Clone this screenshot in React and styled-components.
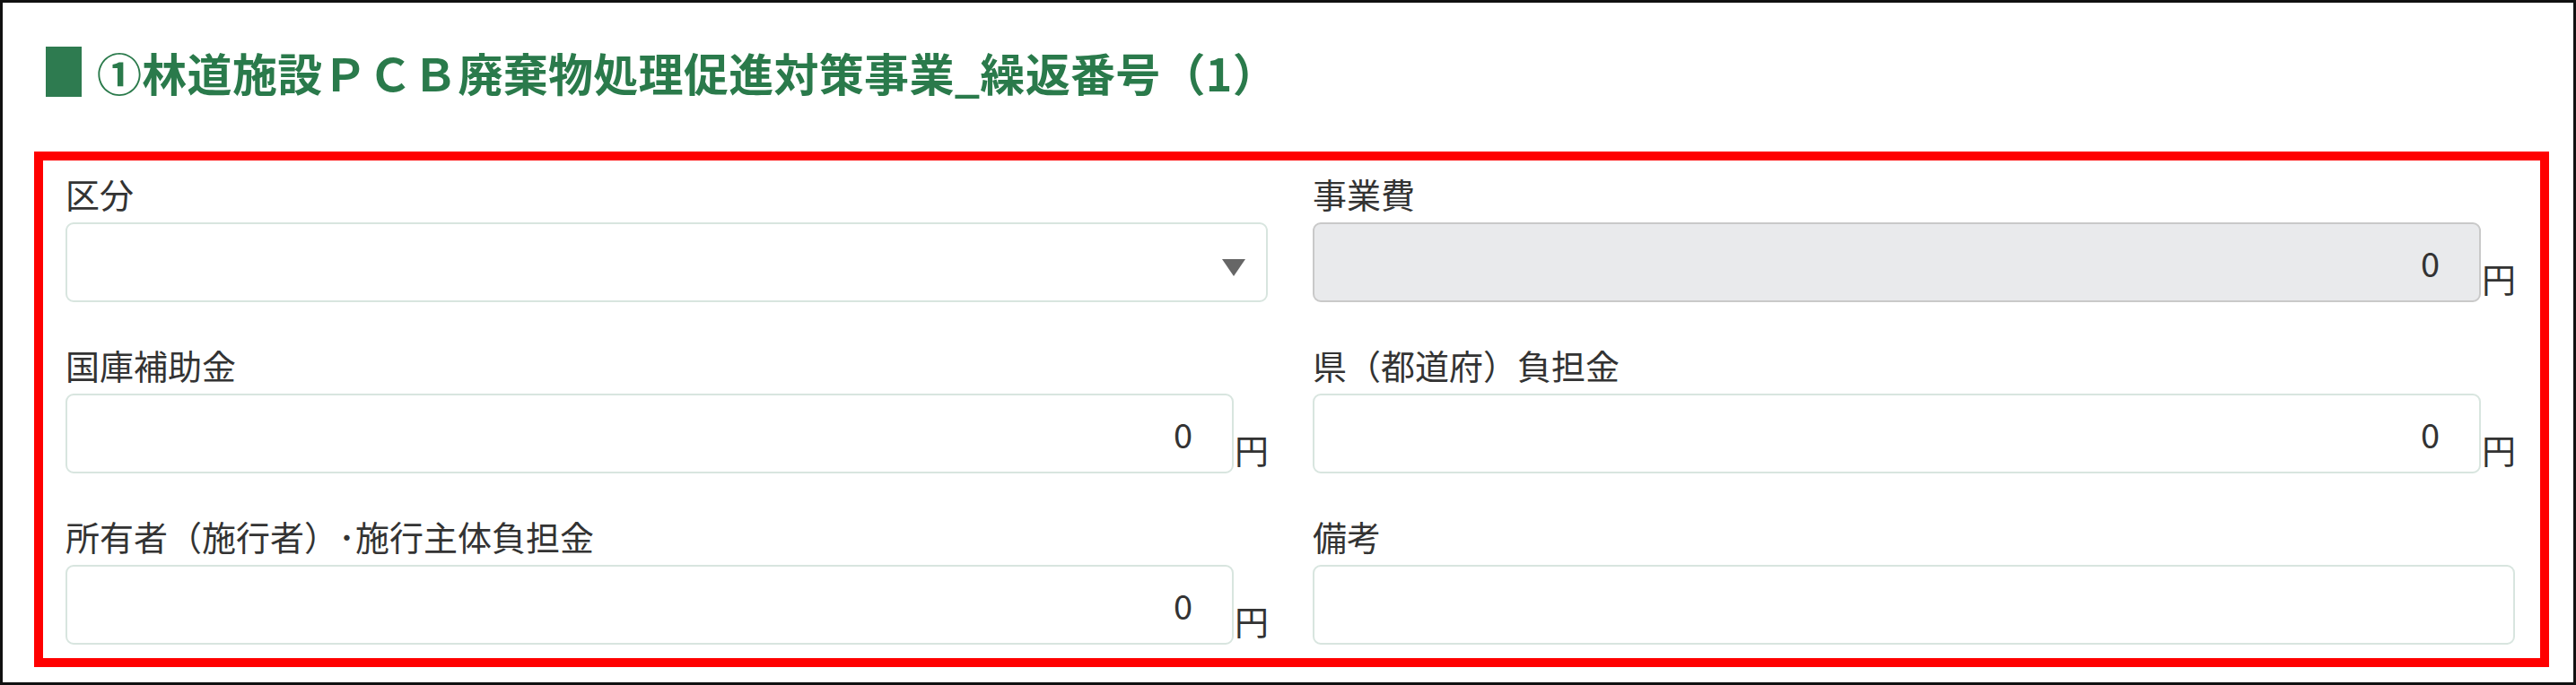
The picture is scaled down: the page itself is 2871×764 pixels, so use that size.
import styled, { createGlobalStyle } from "styled-components";

const GlobalStyle = createGlobalStyle`
  html, body {
    margin: 0;
    padding: 0;
    background: #fff;
  }
  body {
    font-family: "Noto Sans CJK JP", "Noto Sans", sans-serif;
    color: #333;
  }
  * {
    box-sizing: border-box;
  }
`;

const Frame = styled.div`
  width: 2871px;
  height: 764px;
  border: 3px solid #111;
  padding: 47px 27px 0 35px;
  background: #fff;
`;

const Heading = styled.h2`
  display: flex;
  align-items: center;
  gap: 17px;
  height: 60px;
  margin: 0 0 59px 13px;
  font-size: 50px;
  line-height: 60px;
  font-weight: 700;
  letter-spacing: 0.3px;
  color: #2a7a4b;
  white-space: nowrap;
  &::before {
    content: "";
    width: 40px;
    height: 56px;
    background: #2e7b50;
    flex: none;
  }
`;

const Highlight = styled.section`
  border: 10px solid #ff0000;
  padding: 14px 28px 15px 25px;
  display: grid;
  grid-template-columns: 1fr 1fr;
  column-gap: 50px;
  row-gap: 47px;
`;

const Field = styled.div`
  display: flex;
  flex-direction: column;
  min-width: 0;
`;

const Label = styled.label`
  font-size: 38px;
  line-height: 46px;
  margin-bottom: 9px;
  color: #333;
  white-space: nowrap;
`;

const InputRow = styled.div`
  display: flex;
  align-items: flex-end;
`;

const Box = styled.input`
  flex: 1;
  min-width: 0;
  height: 89px;
  border: 2px solid ${(p) => (p.disabled ? "#c9c9c9" : "#d8e5df")};
  background: ${(p) => (p.disabled ? "#e9eaec" : "#fff")};
  border-radius: 9px;
  font: inherit;
  font-size: 38px;
  color: #333;
  text-align: right;
  padding: 0 44px 0 16px;
  outline: none;
  -webkit-text-fill-color: #333;
  opacity: 1;
`;

const Unit = styled.span`
  width: 37px;
  margin: 0 0 4px 1px;
  font-size: 38px;
  line-height: 46px;
  color: #333;
  white-space: nowrap;
  flex: none;
`;

const Select = styled.div`
  height: 89px;
  border: 2px solid #d8e5df;
  border-radius: 9px;
  background: #fff;
  display: flex;
  align-items: center;
  justify-content: flex-end;
  padding-right: 23px;
  svg {
    margin-top: 12px;
  }
`;

const Arrow = () => (
  <svg width="26" height="19" viewBox="0 0 26 19">
    <polygon points="0,0 26,0 13,19" fill="#666" />
  </svg>
);

const YenField = ({ label, disabled }) => (
  <Field>
    <Label>{label}</Label>
    <InputRow>
      <Box readOnly disabled={disabled} defaultValue="0" />
      <Unit>円</Unit>
    </InputRow>
  </Field>
);

export default function App() {
  return (
    <>
      <GlobalStyle />
      <Frame>
        <Heading>①林道施設ＰＣＢ廃棄物処理促進対策事業_繰返番号（1）</Heading>
        <Highlight>
          <Field>
            <Label>区分</Label>
            <Select>
              <Arrow />
            </Select>
          </Field>
          <YenField label="事業費" disabled />
          <YenField label="国庫補助金" />
          <YenField label="県（都道府）負担金" />
          <YenField label="所有者（施行者）･施行主体負担金" />
          <Field>
            <Label>備考</Label>
            <InputRow>
              <Box readOnly defaultValue="" />
            </InputRow>
          </Field>
        </Highlight>
      </Frame>
    </>
  );
}
